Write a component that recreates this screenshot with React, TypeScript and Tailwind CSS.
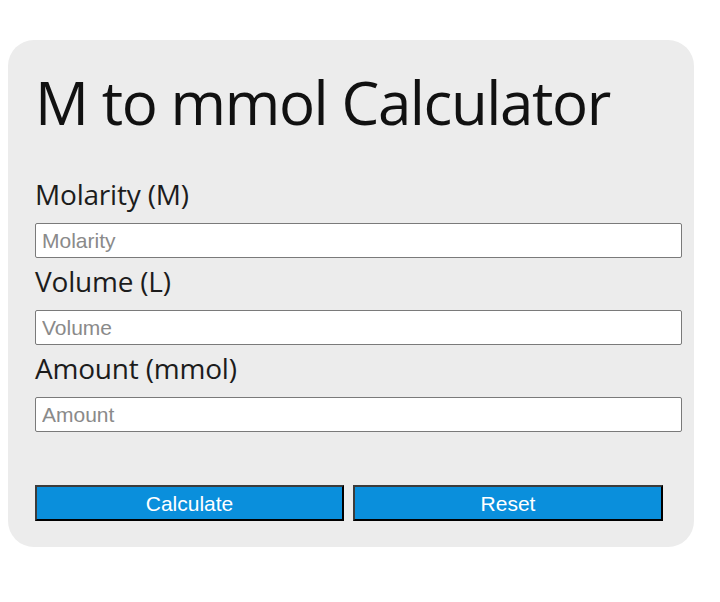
export default function App() {
  return (
    <div className="min-h-[602px] w-[720px] bg-white pt-[40px] pl-[8px]">
      <div className="w-[686px] rounded-[26px] bg-[#ececec] pt-[32px] pb-[26px] pl-[27px] pr-[12px]">
        <h1
          className="text-[60px] leading-[60px] text-[#111] tracking-[-1.4px] mb-[45px]"
          style={{ fontFamily: '"Open Sans", "Noto Sans", sans-serif' }}
        >
          M to mmol Calculator
        </h1>

        <Field label="Molarity (M)" placeholder="Molarity" />
        <div className="h-[6px]" />
        <Field label="Volume (L)" placeholder="Volume" />
        <div className="h-[6px]" />
        <Field label="Amount (mmol)" placeholder="Amount" />

        <div className="mt-[53px] flex gap-[9px]">
          <button className="h-[36px] w-[309px] border-2 border-solid border-t-[#3c3c3c] border-l-[#3c3c3c] border-r-black border-b-black bg-[#0a8fdc] text-[21px] leading-none text-white font-['Liberation_Sans',Arial,sans-serif]">
            Calculate
          </button>
          <button className="h-[36px] w-[310px] border-2 border-solid border-t-[#3c3c3c] border-l-[#3c3c3c] border-r-black border-b-black bg-[#0a8fdc] text-[21px] leading-none text-white font-['Liberation_Sans',Arial,sans-serif]">
            Reset
          </button>
        </div>
      </div>
    </div>
  );
}

function Field({ label, placeholder }: { label: string; placeholder: string }) {
  return (
    <div>
      <label
        className="block text-[28px] leading-[34px] text-[#1c1c1c] tracking-[-0.2px] mb-[12px]"
        style={{ fontFamily: '"Open Sans", "Noto Sans", sans-serif' }}
      >
        {label}
      </label>
      <input
        type="text"
        placeholder={placeholder}
        className="block h-[35px] w-[647px] rounded-[2px] border border-solid border-[#7a7a7a] bg-white px-[6px] text-[21px] text-[#222] placeholder:text-[#8a8a8a] outline-none font-['Liberation_Sans',Arial,sans-serif]"
      />
    </div>
  );
}
